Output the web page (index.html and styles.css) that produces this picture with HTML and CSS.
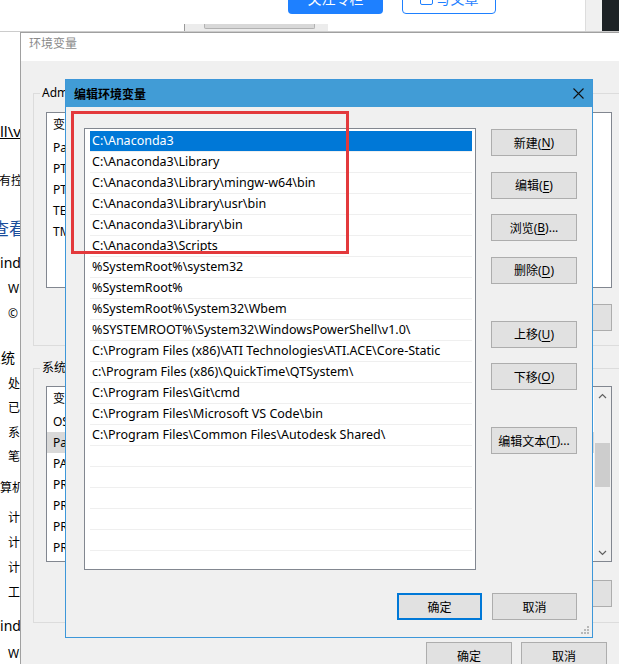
FILE: index.html
```html
<!DOCTYPE html>
<html lang="zh-CN">

<head>
    <meta charset="utf-8" />
    <title>编辑环境变量</title>
    <link rel="stylesheet" href="styles.css">
</head>

<body>
    <!-- the web page and control panel that sit behind the dialogs -->
    <div class="page">
        <div class="page-header">
            <div class="header-main">
                <div class="header-top">
                    <span class="btn-follow">关注专栏</span>
                    <span class="btn-write"><span class="write-icon"></span>写文章</span>
                </div>
                <div class="header-bar"><div class="header-thumb"></div></div>
            </div>
            <div class="side-gray"></div>
            <div class="side-dark"></div>
        </div>

        <div class="page-side">
            <div class="side-line crumb mt87">ll\viewer</div>
            <div class="side-line mt26 out1">有控制面板项</div>
            <div class="side-line heading mt24 out8">查看有关计算机的基本信息</div>
            <div class="side-line section mt10 out13">Windows 版本</div>
            <div class="side-line mt2 in8">Windows 10 家庭中文版</div>
            <div class="side-line mt1 in8">© 2017 Microsoft Corporation。保留所有权利。</div>
            <div class="side-line section mt20 out13">系统</div>
            <div class="side-line mt2 in8">处理器:</div>
            <div class="side-line in8">已安装的内存(RAM):</div>
            <div class="side-line mt1 in8">系统类型:</div>
            <div class="side-line in8">笔和触控:</div>
            <div class="side-line mt7 out12">计算机名、域和工作组设置</div>
            <div class="side-line mt6 in8">计算机名:</div>
            <div class="side-line mt1 in8">计算机全名:</div>
            <div class="side-line mt1 in8">计算机描述:</div>
            <div class="side-line mt1 in8">工作组:</div>
            <div class="side-line section mt9 out13">Windows 激活</div>
            <div class="side-line mt4 in8">Windows 已激活。</div>
        </div>
    </div>

    <!-- 环境变量 (inactive, behind) -->
    <div class="win env-win">
        <div class="env-title">环境变量</div>
        <div class="env-body">
            <div class="group">
                <div class="group-title">Administrator 的用户变量(<u>U</u>)</div>
                <div class="var-list user-list">
                    <div class="var-table">
                        <div class="var-head"><span class="col-name">变量</span><span>值</span></div>
                        <div class="var-row"><span class="col-name">Path</span><span>C:\Users\Administrator\AppData\Local\Microsoft\WindowsApps;</span></div>
                        <div class="var-row"><span class="col-name">PTSminiPath</span><span>C:\PTS</span></div>
                        <div class="var-row"><span class="col-name">PTSPath</span><span>C:\PTS\bin</span></div>
                        <div class="var-row"><span class="col-name">TEMP</span><span>%USERPROFILE%\AppData\Local\Temp</span></div>
                        <div class="var-row"><span class="col-name">TMP</span><span>%USERPROFILE%\AppData\Local\Temp</span></div>
                    </div>
                </div>
                <div class="group-buttons">
                    <button class="btn">新建(<u>N</u>)...</button>
                    <button class="btn">编辑(<u>E</u>)...</button>
                    <button class="btn">删除(<u>D</u>)</button>
                </div>
            </div>

            <div class="group group-system">
                <div class="group-title">系统变量(<u>S</u>)</div>
                <div class="var-list system-list">
                    <div class="var-table">
                        <div class="var-head"><span class="col-name">变量</span><span>值</span></div>
                        <div class="var-row"><span class="col-name">OS</span><span>Windows_NT</span></div>
                        <div class="var-row picked"><span class="col-name">Path</span><span>C:\Anaconda3;C:\Anaconda3\Library;</span></div>
                        <div class="var-row"><span class="col-name">PATHEXT</span><span>.COM;.EXE;.BAT;.CMD;.VBS;.VBE;.JS</span></div>
                        <div class="var-row"><span class="col-name">PROCESSOR_ARCHITECTURE</span><span>AMD64</span></div>
                        <div class="var-row"><span class="col-name">PROCESSOR_IDENTIFIER</span><span>Intel64 Family 6</span></div>
                        <div class="var-row"><span class="col-name">PROCESSOR_LEVEL</span><span>6</span></div>
                        <div class="var-row"><span class="col-name">PROCESSOR_REVISION</span><span>3c03</span></div>
                    </div>
                    <div class="scrollbar">
                        <div class="scroll-arrow">
                            <svg width="9" height="6" viewBox="0 0 9 6"><path d="M1 5 L4.5 1.5 L8 5" fill="none" stroke="#606060" stroke-width="1.2" /></svg>
                        </div>
                        <div class="scroll-track"><div class="scroll-thumb"></div></div>
                        <div class="scroll-arrow">
                            <svg width="9" height="6" viewBox="0 0 9 6"><path d="M1 1 L4.5 4.5 L8 1" fill="none" stroke="#606060" stroke-width="1.2" /></svg>
                        </div>
                    </div>
                </div>
                <div class="group-buttons buttons-low">
                    <button class="btn">新建(<u>W</u>)...</button>
                    <button class="btn">编辑(<u>I</u>)...</button>
                    <button class="btn">删除(<u>L</u>)</button>
                </div>
            </div>

            <div class="env-footer">
                <button class="btn">确定</button>
                <button class="btn">取消</button>
            </div>
        </div>
    </div>

    <!-- 编辑环境变量 (active, on top) -->
    <div class="win edit-win">
        <div class="edit-title">
            <span class="edit-caption">编辑环境变量</span>
            <span class="close-btn">
                <svg width="11" height="11" viewBox="0 0 11 11"><path d="M0.5 0.5 L10.5 10.5 M10.5 0.5 L0.5 10.5" stroke="#111" stroke-width="1.1" /></svg>
            </span>
        </div>
        <div class="edit-body">
            <div class="edit-main">
                <div class="path-list">
                    <div class="path-row selected">C:\Anaconda3</div>
                    <div class="path-row">C:\Anaconda3\Library</div>
                    <div class="path-row">C:\Anaconda3\Library\mingw-w64\bin</div>
                    <div class="path-row">C:\Anaconda3\Library\usr\bin</div>
                    <div class="path-row">C:\Anaconda3\Library\bin</div>
                    <div class="path-row">C:\Anaconda3\Scripts</div>
                    <div class="path-row">%SystemRoot%\system32</div>
                    <div class="path-row">%SystemRoot%</div>
                    <div class="path-row">%SystemRoot%\System32\Wbem</div>
                    <div class="path-row">%SYSTEMROOT%\System32\WindowsPowerShell\v1.0\</div>
                    <div class="path-row">C:\Program Files (x86)\ATI Technologies\ATI.ACE\Core-Static</div>
                    <div class="path-row">c:\Program Files (x86)\QuickTime\QTSystem\</div>
                    <div class="path-row">C:\Program Files\Git\cmd</div>
                    <div class="path-row">C:\Program Files\Microsoft VS Code\bin</div>
                    <div class="path-row">C:\Program Files\Common Files\Autodesk Shared\</div>
                    <div class="path-row"></div>
                    <div class="path-row"></div>
                    <div class="path-row"></div>
                    <div class="path-row"></div>
                    <div class="path-row"></div>
                    <div class="path-row"></div>
                </div>
                <div class="edit-buttons">
                    <button class="btn">新建(<u>N</u>)</button>
                    <button class="btn">编辑(<u>E</u>)</button>
                    <button class="btn">浏览(<u>B</u>)...</button>
                    <button class="btn">删除(<u>D</u>)</button>
                    <button class="btn far">上移(<u>U</u>)</button>
                    <button class="btn">下移(<u>O</u>)</button>
                    <button class="btn far">编辑文本(<u>T</u>)...</button>
                </div>
            </div>
            <div class="edit-footer">
                <button class="btn btn-default">确定</button>
                <button class="btn">取消</button>
            </div>
        </div>

        <!-- red annotation round the Anaconda entries -->
        <div class="mark"></div>

        <svg class="grip" width="10" height="10" viewBox="0 0 10 10">
            <rect x="7" y="1" width="2" height="2" fill="#b8b8b8" />
            <rect x="4" y="4" width="2" height="2" fill="#b8b8b8" />
            <rect x="7" y="4" width="2" height="2" fill="#b8b8b8" />
            <rect x="1" y="7" width="2" height="2" fill="#b8b8b8" />
            <rect x="4" y="7" width="2" height="2" fill="#b8b8b8" />
            <rect x="7" y="7" width="2" height="2" fill="#b8b8b8" />
        </svg>
    </div>
</body>

</html>
```

FILE: styles.css
```css
* {
    box-sizing: border-box;
}

html,
body {
    margin: 0;
}

body {
    position: relative;
    width: 619px;
    height: 664px;
    overflow: hidden;
    background: #fff;
    color: #000;
    font-family: "Noto Sans", "Noto Sans CJK SC", sans-serif;
    font-size: 12px;
}

u {
    text-decoration: underline;
    text-underline-offset: 2px;
}

/* ---- page behind ---- */

.page-header {
    display: flex;
    height: 32px;
    border-bottom: 1px solid #cccccc;
}

.header-main {
    width: 585px;
    display: flex;
    flex-direction: column;
}

.header-top {
    display: flex;
    height: 24px;
}

.btn-follow,
.btn-write {
    display: flex;
    align-items: center;
    justify-content: center;
    gap: 4px;
    height: 32px;
    margin-top: -18px;
    border-radius: 4px;
    font-family: "Noto Sans CJK SC", sans-serif;
    font-size: 14px;
}

.btn-follow {
    margin-left: 288px;
    width: 95px;
    background: #1e80ff;
    color: #fff;
}

.btn-write {
    margin-left: 19px;
    width: 94px;
    border: 1px solid #1e80ff;
    background: #fff;
    color: #1e80ff;
}

.write-icon {
    width: 13px;
    height: 13px;
    border: 1.5px solid #1e80ff;
    border-radius: 2px;
}

.header-bar {
    margin-left: 184px;
    width: 144px;
    height: 7px;
    border-left: 1px solid #999;
    background: #ececec;
}

.header-thumb {
    margin-left: 19px;
    width: 111px;
    height: 5px;
    background: #d8d8d8;
    border: 1px solid #b2b2b2;
    border-top: none;
    border-radius: 0 0 2px 2px;
}

.side-gray {
    width: 17px;
    background: #f0f0f0;
    border-left: 1px solid #dddddd;
}

.side-dark {
    flex: 1;
    background: #1d2225;
}

.page-side {
    width: 80px;
    overflow: hidden;
}

.side-line {
    height: 24px;
    line-height: 24px;
    white-space: nowrap;
    font-family: "Noto Sans", "Noto Sans CJK SC", sans-serif;
    font-size: 12px;
}

.crumb {
    font-size: 15px;
    text-decoration: underline;
}

.heading {
    font-size: 17px;
    color: #1a4d9c;
}

.section {
    font-size: 14px;
}

.mt1 { margin-top: 1px; }
.mt2 { margin-top: 2px; }
.mt4 { margin-top: 4px; }
.mt6 { margin-top: 6px; }
.mt7 { margin-top: 7px; }
.mt9 { margin-top: 9px; }
.mt10 { margin-top: 10px; }
.mt20 { margin-top: 20px; }
.mt24 { margin-top: 24px; }
.mt26 { margin-top: 26px; }
.mt87 { margin-top: 87px; }

.in8 { margin-left: 8px; }
.out1 { margin-left: -1px; }
.out8 { margin-left: -8px; }
.out12 { margin-left: -12px; }
.out13 { margin-left: -13px; }

/* ---- windows ---- */

.win {
    position: absolute;
    background: #f0f0f0;
}

.btn {
    display: flex;
    align-items: center;
    justify-content: center;
    width: 86px;
    height: 27px;
    padding: 0;
    margin: 0;
    background: #e1e1e1;
    border: 1px solid #adadad;
    color: #000;
    font-family: "Noto Sans", "Noto Sans CJK SC", sans-serif;
    font-size: 12px;
}

/* 环境变量 */

.env-win {
    left: 20px;
    top: 32px;
    width: 620px;
    height: 640px;
    border: 1px solid #a0a0a0;
}

.env-title {
    height: 28px;
    padding: 3px 0 0 8px;
    line-height: 16px;
    background: #fff;
    color: #8a8a8a;
}

.env-body {
    padding: 32px 0 0 12px;
}

.group {
    width: 592px;
    padding: 0 12px 14px;
    border: 1px solid #dcdcdc;
}

.group-system {
    margin-top: 22px;
    padding-bottom: 15px;
}

.group-title {
    width: fit-content;
    margin: -9px 0 0 -6px;
    padding: 0 2px;
    line-height: 16px;
    background: #f0f0f0;
}

.var-list {
    display: flex;
    height: 176px;
    margin-top: 11px;
    background: #fff;
    border: 1px solid #828790;
}

.system-list {
    margin-top: 10px;
}

.var-table {
    flex: 1;
    overflow: hidden;
}

.var-head {
    display: flex;
    height: 24px;
    line-height: 24px;
    padding-left: 6px;
    white-space: nowrap;
}

.var-row {
    display: flex;
    height: 21px;
    line-height: 21px;
    padding-left: 6px;
    white-space: nowrap;
}

.var-row.picked {
    background: #d9d9d9;
}

.col-name {
    width: 160px;
}

.scrollbar {
    display: flex;
    flex-direction: column;
    width: 17px;
    background: #f0f0f0;
}

.scroll-arrow {
    display: flex;
    align-items: center;
    justify-content: center;
    height: 17px;
}

.scroll-track {
    flex: 1;
    padding: 39px 1px 0;
}

.scroll-thumb {
    height: 44px;
    background: #cdcdcd;
}

.group-buttons {
    display: flex;
    justify-content: flex-end;
    gap: 9px;
    margin-top: 16px;
}

.buttons-low {
    margin-top: 18px;
}

.env-footer {
    display: flex;
    justify-content: flex-end;
    gap: 9px;
    margin-top: 19px;
    width: 574px;
}

/* 编辑环境变量 */

.edit-win {
    left: 65px;
    top: 79px;
    width: 528px;
    height: 559px;
    border: 1px solid #3d97d9;
}

.edit-title {
    display: flex;
    align-items: center;
    justify-content: space-between;
    height: 27px;
    padding-left: 8px;
    background: #419cd6;
}

.edit-caption {
    font-family: "Noto Sans CJK SC", sans-serif;
    font-weight: bold;
    font-size: 12px;
    color: #000;
}

.close-btn {
    display: flex;
    align-items: center;
    justify-content: center;
    width: 28px;
    height: 27px;
}

.edit-body {
    padding: 21px 15px 0 18px;
}

.edit-main {
    display: flex;
}

.path-list {
    width: 392px;
    height: 442px;
    padding: 2px 3px 0 5px;
    overflow: hidden;
    background: #fff;
    border: 1px solid #828790;
}

.path-row {
    height: 21px;
    line-height: 20px;
    padding-left: 2px;
    border-bottom: 1px solid #efefef;
    white-space: nowrap;
    font-size: 12.5px;
}

.path-row.selected {
    background: #0078d7;
    color: #fff;
}

.edit-buttons {
    display: flex;
    flex-direction: column;
    gap: 15.5px;
    margin: 1px 0 0 15px;
}

.edit-buttons .far {
    margin-top: 21.5px;
}

.edit-footer {
    display: flex;
    justify-content: flex-end;
    gap: 10px;
    margin-top: 23px;
}

.edit-footer .btn {
    width: 85px;
}

.btn-default {
    border: 2px solid #0078d7;
}

.mark {
    position: absolute;
    left: 5px;
    top: 31px;
    width: 278px;
    height: 143px;
    border: 3px solid #e3393c;
}

.grip {
    position: absolute;
    right: 2px;
    bottom: 2px;
}
```
